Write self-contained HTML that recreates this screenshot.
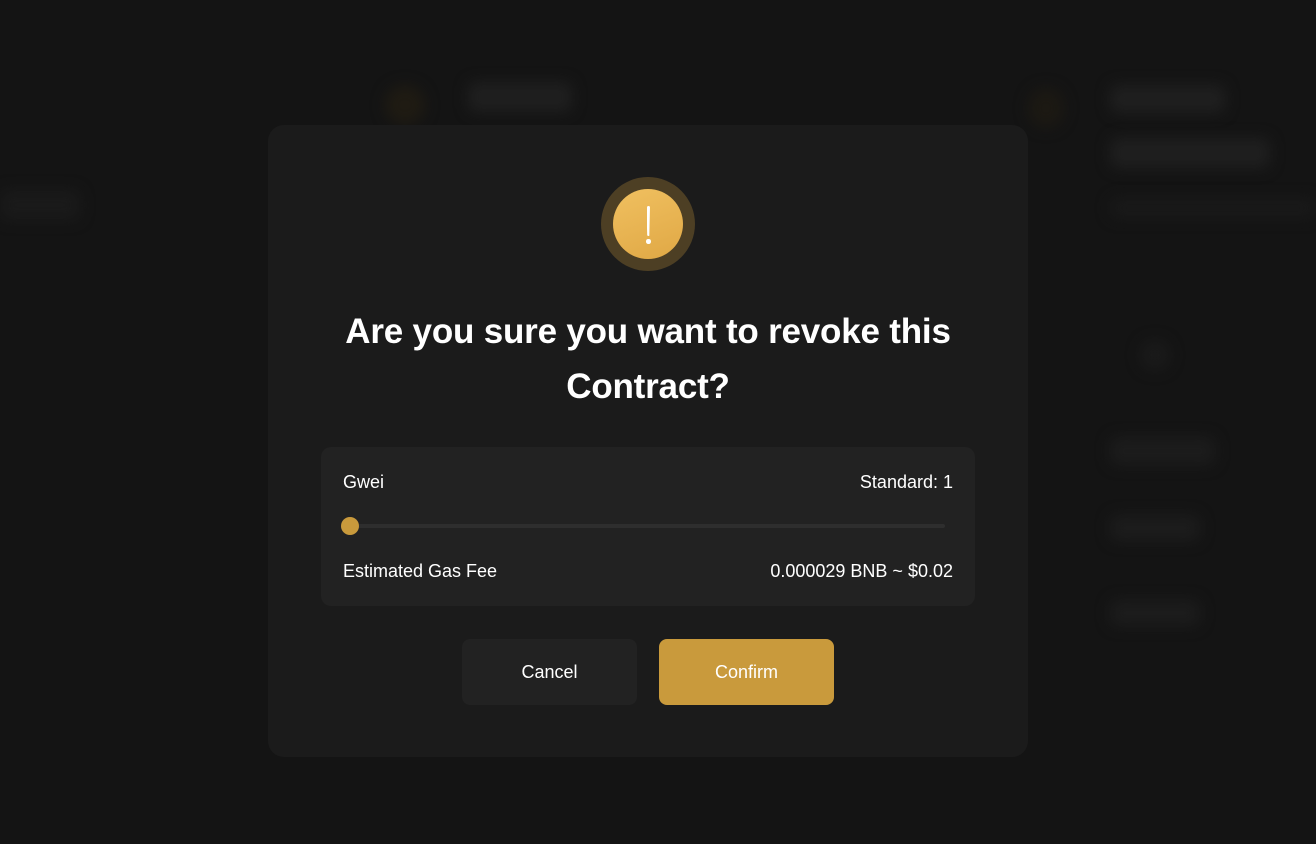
<!DOCTYPE html>
<html><head><style>
*{margin:0;padding:0;box-sizing:border-box}
body{width:1316px;height:844px;background:#141414;position:relative;overflow:hidden;font-family:"Liberation Sans",Arial,sans-serif;color:#fff}
.bl{position:absolute;background:#1f1f1f;border-radius:8px;filter:blur(7px)}
.modal{position:absolute;left:268px;top:125px;width:760px;height:632px;background:#1b1b1b;border-radius:16px}
.ring{position:absolute;left:601px;top:177px;width:94px;height:94px;border-radius:50%;background:#4d3f24}
.core{position:absolute;left:613px;top:189px;width:70px;height:70px;border-radius:50%;background:linear-gradient(160deg,#f0c060,#e0a845)}
.ex{position:absolute;left:646.5px;top:206px;width:3.5px;height:30px;background:#fff;border-radius:2px;clip-path:polygon(0 0,100% 0,80% 100%,20% 100%)}
.dot{position:absolute;left:646px;top:239px;width:4.5px;height:4.5px;background:#fff;border-radius:50%}
.title{position:absolute;left:268px;width:760px;text-align:center;font-size:35px;font-weight:bold;line-height:55px;top:304px;letter-spacing:-0.2px}
.panel{position:absolute;left:321px;top:447px;width:654px;height:159px;background:#222;border-radius:10px}
.t{position:absolute;font-size:18px;color:#fff}
.track{position:absolute;left:350px;top:524px;width:595px;height:4px;background:#2e2e2e;border-radius:2px}
.thumb{position:absolute;left:341px;top:517px;width:18px;height:18px;border-radius:50%;background:#c99a3c}
.btn{position:absolute;top:639px;width:175px;height:66px;border-radius:8px;font-size:18px;display:flex;align-items:center;justify-content:center}
</style></head><body>
<div class="bl" style="left:385px;top:85px;width:40px;height:40px;border-radius:50%;background:#1f1b13"></div>
<div class="bl" style="left:468px;top:82px;width:104px;height:30px"></div>
<div class="bl" style="left:1028px;top:88px;width:36px;height:40px;border-radius:50%;background:#1c1913"></div>
<div class="bl" style="left:1110px;top:85px;width:115px;height:28px"></div>
<div class="bl" style="left:1110px;top:138px;width:160px;height:30px"></div>
<div class="bl" style="left:1110px;top:198px;width:206px;height:20px;background:#191919"></div>
<div class="bl" style="left:0px;top:190px;width:80px;height:30px;background:#1a1a1a"></div>
<div class="bl" style="left:1140px;top:340px;width:30px;height:30px;border-radius:50%;background:#1a1a1a"></div>
<div class="bl" style="left:1110px;top:437px;width:105px;height:28px;background:#1c1c1c"></div>
<div class="bl" style="left:1110px;top:515px;width:90px;height:26px;background:#1c1c1c"></div>
<div class="bl" style="left:1110px;top:600px;width:90px;height:26px;background:#1c1c1c"></div>
<div class="modal"></div>
<div class="ring"></div><div class="core"></div><div class="ex"></div><div class="dot"></div>
<div class="title">Are you sure you want to revoke this<br>Contract?</div>
<div class="panel"></div>
<div class="t" style="left:343px;top:472px">Gwei</div>
<div class="t" style="right:363px;top:472px">Standard: 1</div>
<div class="track"></div><div class="thumb"></div>
<div class="t" style="left:343px;top:561px">Estimated Gas Fee</div>
<div class="t" style="right:363px;top:561px">0.000029 BNB ~ $0.02</div>
<div class="btn" style="left:462px;background:#222">Cancel</div>
<div class="btn" style="left:659px;background:#c99a3c">Confirm</div>
</body></html>
